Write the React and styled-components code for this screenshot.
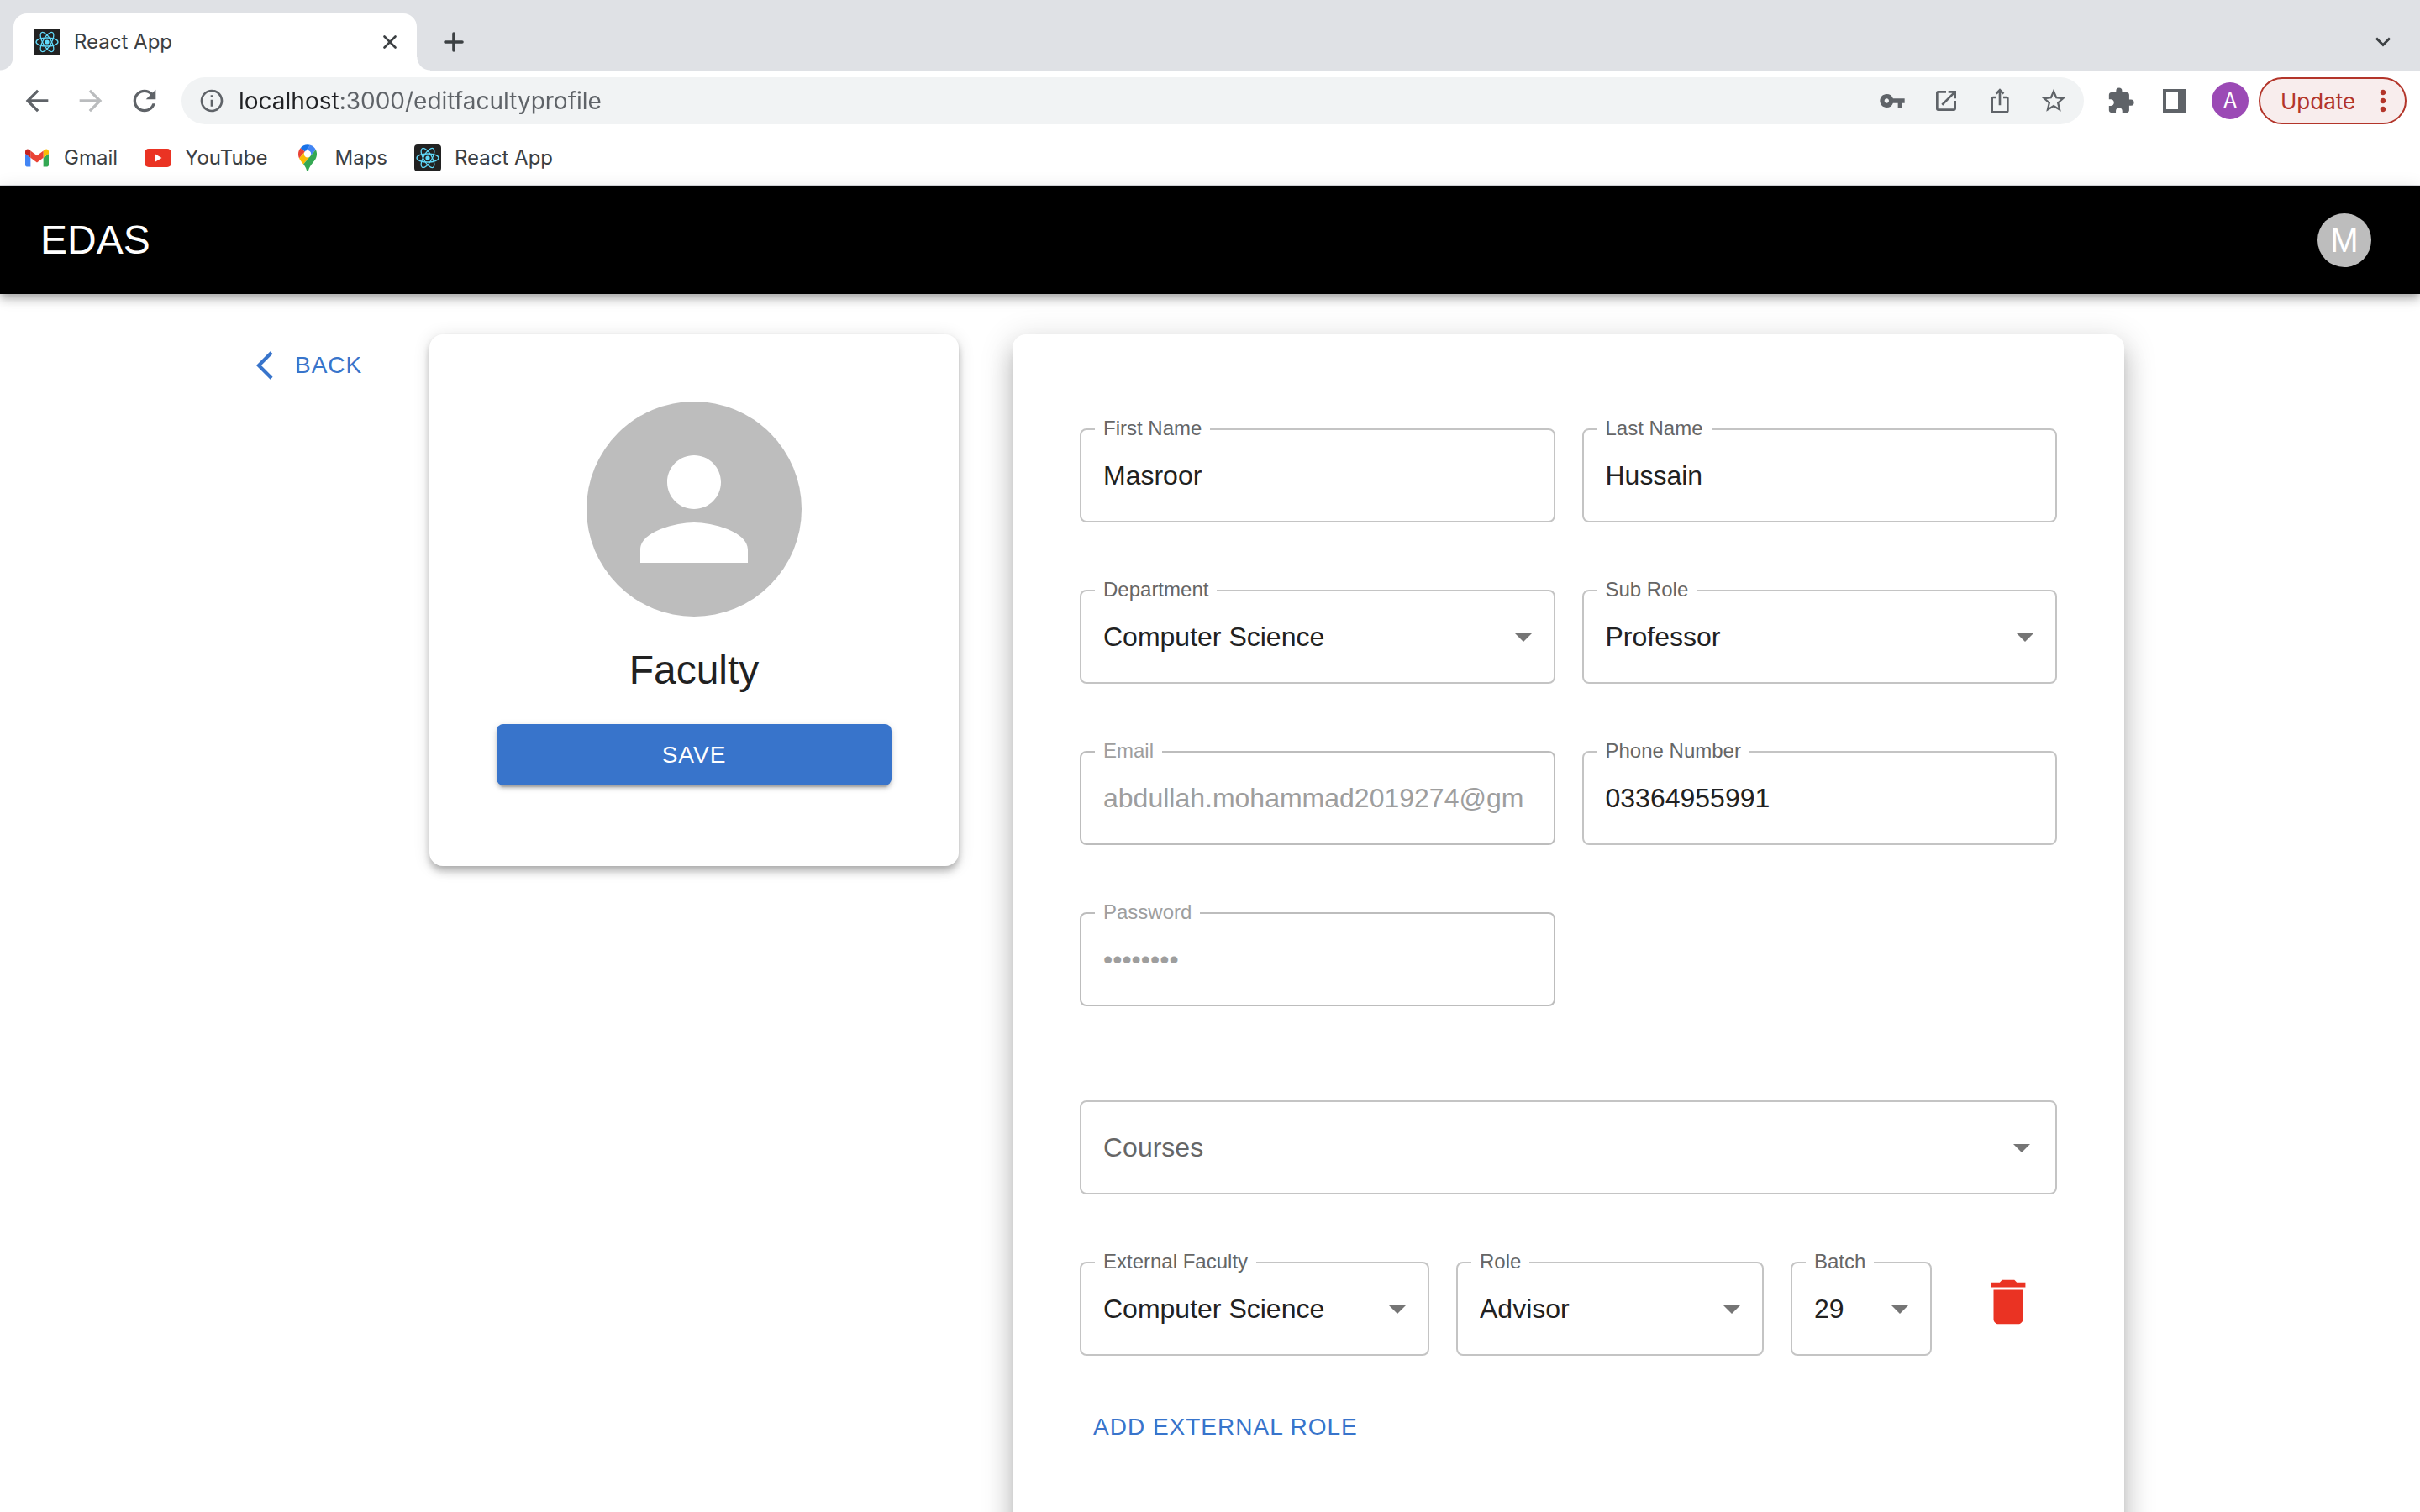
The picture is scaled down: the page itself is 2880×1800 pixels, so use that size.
import React from "react";
import styled, { createGlobalStyle, css } from "styled-components";
import {
  MdArrowBack,
  MdArrowForward,
  MdRefresh,
  MdInfoOutline,
  MdVpnKey,
  MdOpenInNew,
  MdIosShare,
  MdStarBorder,
  MdExtension,
  MdMoreVert,
} from "react-icons/md";

const chromeFont = `Inter, Roboto, "Liberation Sans", sans-serif`;
const appFont = `"Liberation Sans", Arial, sans-serif`;

const GlobalStyle = createGlobalStyle`
  *, *::before, *::after { box-sizing: border-box; }
  body { margin: 0; background: #fff; font-family: ${appFont}; }
  button, input, select { font: inherit; color: inherit; margin: 0; }
  button { cursor: pointer; }
  svg { display: block; flex: none; }
`;

const Window = styled.div`
  display: flex;
  flex-direction: column;
  height: 100vh;
  overflow: hidden;
`;

/* ---------- Browser frame ---------- */

const BrowserFrame = styled.header`
  flex: none;
  font-family: ${chromeFont};
  border-bottom: 2px solid #dadce0;
`;

const TabStrip = styled.div`
  display: flex;
  align-items: center;
  height: 84px;
  padding: 16px 12px 0 16px;
  background: #dfe1e5;
  color: #3c4043;
`;

const Tab = styled.div`
  position: relative;
  display: flex;
  align-items: center;
  align-self: flex-end;
  gap: 16px;
  width: 480px;
  height: 68px;
  padding: 0 16px 0 24px;
  border-radius: 16px 16px 0 0;
  background: #fff;
  font-size: 24px;

  &::before,
  &::after {
    content: "";
    position: absolute;
    bottom: 0;
    width: 16px;
    height: 16px;
  }
  &::before {
    right: 100%;
    background: radial-gradient(circle at 0 0, transparent 15px, #fff 16px);
  }
  &::after {
    left: 100%;
    background: radial-gradient(circle at 100% 0, transparent 15px, #fff 16px);
  }
`;

const TabTitle = styled.span`
  flex: 1;
  line-height: 32px;
`;

const IconButton = styled.button`
  display: flex;
  flex: none;
  align-items: center;
  justify-content: center;
  width: ${(p) => p.$width || 64}px;
  height: 56px;
  padding: 0;
  border: 0;
  background: none;
  color: ${(p) => p.$color || "#5f6368"};
`;

const Spacer = styled.div`
  flex: 1;
`;

const Toolbar = styled.div`
  display: flex;
  align-items: center;
  gap: 12px;
  padding: 8px 16px 8px 12px;
`;

const ButtonGroup = styled.div`
  display: flex;
  align-items: center;
`;

const AddressBar = styled.div`
  display: flex;
  flex: 1;
  align-items: center;
  height: 56px;
  padding: 0 4px;
  border-radius: 28px;
  background: #f1f3f4;
`;

const AddressInput = styled.input`
  flex: 1;
  min-width: 0;
  height: 40px;
  padding: 0;
  border: 0;
  outline: 0;
  font-size: 28px;
  background: linear-gradient(to right, #202124 122px, #5f6368 122px);
  background-clip: text;
  -webkit-background-clip: text;
  -webkit-text-fill-color: transparent;
`;

const ProfileBadge = styled.button`
  width: 44px;
  height: 44px;
  padding: 0;
  border: 0;
  border-radius: 50%;
  background: #9b4ab5;
  color: #fff;
  font-size: 24px;
  line-height: 44px;
`;

const UpdateButton = styled.button`
  display: flex;
  align-items: center;
  justify-content: space-between;
  width: 176px;
  height: 56px;
  padding: 0 6px 0 24px;
  border: 2px solid #b3352a;
  border-radius: 28px;
  background: #f8eded;
  color: #b3352a;
  font-size: 26px;
`;

const BookmarksBar = styled.nav`
  display: flex;
  align-items: center;
  gap: 32px;
  height: 64px;
  padding: 0 28px;
`;

const Bookmark = styled.a`
  display: flex;
  align-items: center;
  gap: 16px;
  color: #3c4043;
  font-size: 24px;
  line-height: 32px;
  text-decoration: none;
`;

const BookmarkIcon = styled.span`
  display: flex;
  align-items: center;
  justify-content: center;
  width: 32px;
  height: 32px;
`;

/* ---------- Application ---------- */

const AppBar = styled.header`
  position: relative;
  z-index: 1;
  display: flex;
  flex: none;
  align-items: center;
  justify-content: space-between;
  height: 128px;
  padding: 0 58px 0 48px;
  background: #000;
  color: #fff;
  box-shadow:
    0 4px 8px -2px rgba(0, 0, 0, 0.2),
    0 8px 10px 0 rgba(0, 0, 0, 0.14),
    0 2px 20px 0 rgba(0, 0, 0, 0.12);
`;

const Brand = styled.span`
  font-size: 48px;
  line-height: 64px;
`;

const UserAvatar = styled.button`
  width: 64px;
  height: 64px;
  padding: 0;
  border: 0;
  border-radius: 50%;
  background: #bdbdbd;
  color: #fff;
  font-size: 40px;
  line-height: 64px;
`;

const Main = styled.main`
  display: grid;
  grid-template-columns: 160px 630fr 1323fr;
  align-items: start;
  gap: 64px;
  flex: 1;
  min-height: 0;
  padding: 48px 352px 0 287px;
  overflow: hidden;
`;

const actionText = css`
  font-size: 28px;
  line-height: 49px;
  letter-spacing: 1px;
  text-transform: uppercase;
`;

const TextButton = styled.button`
  ${actionText}
  display: flex;
  align-items: center;
  gap: 16px;
  align-self: start;
  padding: 12px 16px;
  border: 0;
  background: none;
  color: #3874cb;
`;

const BackButton = styled(TextButton)`
  padding-left: 8px;
`;

const Card = styled.section`
  padding: 80px 80px 96px;
  border-radius: 16px;
  background: #fff;
`;

const ProfileCard = styled(Card)`
  display: flex;
  flex-direction: column;
  align-items: center;
  gap: 32px;
  box-shadow:
    0 4px 8px -2px rgba(0, 0, 0, 0.2),
    0 8px 10px 0 rgba(0, 0, 0, 0.14),
    0 2px 20px 0 rgba(0, 0, 0, 0.12);
`;

const Portrait = styled.div`
  display: flex;
  align-items: center;
  justify-content: center;
  width: 256px;
  height: 256px;
  border-radius: 50%;
  background: #bdbdbd;
  color: #fff;
`;

const RoleTitle = styled.h1`
  margin: 0;
  color: #212121;
  font-size: 48px;
  font-weight: 400;
  line-height: 64px;
`;

const SaveButton = styled.button`
  ${actionText}
  width: 100%;
  padding: 12px 32px;
  border: 0;
  border-radius: 8px;
  background: #3874cb;
  color: #fff;
  box-shadow:
    0 6px 2px -4px rgba(0, 0, 0, 0.2),
    0 4px 4px 0 rgba(0, 0, 0, 0.14),
    0 2px 10px 0 rgba(0, 0, 0, 0.12);
`;

const FormCard = styled(Card)`
  padding: 100px 80px 160px;
  box-shadow:
    0 12px 12px -6px rgba(0, 0, 0, 0.2),
    0 20px 28px 2px rgba(0, 0, 0, 0.14),
    0 8px 36px 6px rgba(0, 0, 0, 0.12);
`;

const Form = styled.form`
  display: flex;
  flex-direction: column;
  gap: 68px;
`;

const DetailsGrid = styled.div`
  display: grid;
  grid-template-columns: 1fr 1fr;
  gap: 68px 32px;
  margin-bottom: 44px;
`;

const ExternalSection = styled.div`
  display: flex;
  flex-direction: column;
  gap: 48px;
`;

const ExternalRow = styled.div`
  display: grid;
  grid-template-columns: 416fr 366fr 168fr 117fr;
  gap: 32px;
`;

const Outline = styled.fieldset`
  display: grid;
  min-width: 0;
  margin: 0;
  padding: 0;
  border: 2px solid ${(p) => (p.$muted ? "#bdbdbd" : "#c4c4c4")};
  border-radius: 8px;
`;

const Legend = styled.legend`
  margin-left: 16px;
  padding: 0 10px 2px;
  color: ${(p) => (p.$muted ? "#9e9e9e" : "#666")};
  font-size: 24px;
  line-height: 24px;
`;

const control = css`
  grid-area: 1 / 1;
  width: 100%;
  min-width: 0;
  height: ${(p) => (p.$bare ? 108 : 96)}px;
  padding: ${(p) => (p.$bare ? "36px 26px" : "24px 26px 36px")};
  border: 0;
  outline: 0;
  background: none;
  color: ${(p) => (p.$bare ? "#666" : "#212121")};
  font-size: 32px;
  line-height: 36px;
`;

const TextInput = styled.input`
  ${control}
  &:disabled {
    color: #9e9e9e;
    -webkit-text-fill-color: #9e9e9e;
    opacity: 1;
  }
`;

const Select = styled.select`
  ${control}
  appearance: none;
`;

const ArrowSlot = styled.span`
  grid-area: 1 / 1;
  justify-self: end;
  padding: ${(p) => (p.$bare ? "30px 16px" : "18px 12px")};
  color: #757575;
  pointer-events: none;
`;

const DeleteButton = styled.button`
  display: flex;
  align-items: center;
  justify-content: center;
  align-self: start;
  height: 120px;
  padding: 0;
  border: 0;
  background: none;
  color: #ea3323;
`;

/* ---------- Drawings ---------- */

const Glyph = ({ size, d }) => (
  <svg width={size} height={size} viewBox="0 0 24 24" fill="currentColor" aria-hidden="true">
    <path d={d} />
  </svg>
);

const ReactLogo = () => (
  <svg width="32" height="32" viewBox="0 0 32 32" aria-hidden="true">
    <rect width="32" height="32" rx="4" fill="#222" />
    <g transform="translate(16 16)" fill="none" stroke="#61dafb" strokeWidth="1.3">
      <circle r="2.6" fill="#61dafb" stroke="none" />
      <ellipse rx="13" ry="5" />
      <ellipse rx="13" ry="5" transform="rotate(60)" />
      <ellipse rx="13" ry="5" transform="rotate(120)" />
    </g>
  </svg>
);

const GmailLogo = () => (
  <svg width="28" height="22" viewBox="52 42 88 66" aria-hidden="true">
    <path fill="#4285f4" d="M58 108h14V74L52 59v43c0 3.32 2.69 6 6 6" />
    <path fill="#34a853" d="M120 108h14c3.32 0 6-2.69 6-6V59l-20 15" />
    <path fill="#fbbc04" d="M120 48v26l20-15v-8c0-7.42-8.47-11.65-14.4-7.2" />
    <path fill="#ea4335" d="M72 74V48l24 18 24-18v26L96 92" />
    <path fill="#c5221f" d="M52 51v8l20 15V48l-5.6-4.2c-5.94-4.45-14.4-.22-14.4 7.2" />
  </svg>
);

const YouTubeLogo = () => (
  <svg width="32" height="22" viewBox="0 0 32 22" aria-hidden="true">
    <rect width="32" height="22" rx="5" fill="#ea3323" />
    <path d="M13 6.500v9l7.500-4.500z" fill="#fff" />
  </svg>
);

const MapsLogo = () => (
  <svg width="22" height="32" viewBox="0 0 92.3 132.3" aria-hidden="true">
    <path fill="#1a73e8" d="M60.2 2.2C55.8.8 51 0 46.1 0 32 0 19.3 6.4 10.8 16.5l21.8 18.3L60.2 2.2z" />
    <path fill="#ea4335" d="M10.8 16.5C4.1 24.5 0 34.9 0 46.1c0 8.7 1.7 15.7 4.6 22l28-33.3-21.8-18.3z" />
    <path fill="#4285f4" d="M46.2 28.5c9.8 0 17.7 7.9 17.7 17.7 0 4.3-1.6 8.3-4.2 11.4 0 0 13.9-16.6 27.5-32.7-5.6-10.8-15.3-19-27-22.7L32.6 34.8c3.3-3.8 8.1-6.3 13.6-6.3" />
    <path fill="#fbbc04" d="M46.2 63.8c-9.8 0-17.7-7.9-17.7-17.7 0-4.3 1.5-8.3 4.1-11.3l-28 33.3c4.8 10.6 12.8 19.2 21 29.9l34.1-40.5c-3.3 3.9-8.1 6.3-13.5 6.3" />
    <path fill="#34a853" d="M59.1 109.2c15.4-24.1 33.3-35 33.3-63 0-7.7-1.9-14.9-5.2-21.3L25.6 98c2.6 3.4 5.3 7.3 7.9 11.3 9.4 14.5 6.8 23.1 12.8 23.1s3.4-8.7 12.800-23.2" />
  </svg>
);

const CloseGlyph = () => (
  <svg width="16" height="16" viewBox="0 0 16 16" stroke="currentColor" strokeWidth="2.600" strokeLinecap="round" aria-hidden="true">
    <path d="M1.500 1.500l13 13M14.500 1.500l-13 13" />
  </svg>
);

const PlusGlyph = () => (
  <svg width="24" height="24" viewBox="0 0 24 24" stroke="currentColor" strokeWidth="3.600" strokeLinecap="round" aria-hidden="true">
    <path d="M12 2v20M2 12h20" />
  </svg>
);

const ChevronGlyph = () => (
  <svg width="20" height="12" viewBox="0 0 20 12" fill="none" stroke="currentColor" strokeWidth="3" aria-hidden="true">
    <path d="M2 1.500l8 8 8-8" />
  </svg>
);

const SidePanelGlyph = () => (
  <svg width="28" height="28" viewBox="0 0 28 28" fill="currentColor" aria-hidden="true">
    <path fillRule="evenodd" d="M0 0h28v28H0zM4 4v20h14V4z" />
  </svg>
);

/* ---------- Fields ---------- */

const Field = ({ id, label, disabled, type = "text", value }) => (
  <Outline $muted={disabled}>
    <Legend $muted={disabled}>
      <label htmlFor={id}>{label}</label>
    </Legend>
    <TextInput id={id} type={type} defaultValue={value} disabled={disabled} />
  </Outline>
);

const SelectField = ({ id, label, value }) => (
  <Outline>
    <Legend>
      <label htmlFor={id}>{label}</label>
    </Legend>
    <Select id={id} defaultValue={value}>
      <option>{value}</option>
    </Select>
    <ArrowSlot>
      <Glyph size={48} d="M7 10l5 5 5-5z" />
    </ArrowSlot>
  </Outline>
);

const bookmarks = [
  { name: "Gmail", Logo: GmailLogo },
  { name: "YouTube", Logo: YouTubeLogo },
  { name: "Maps", Logo: MapsLogo },
  { name: "React App", Logo: ReactLogo },
];

const Browser = () => (
  <BrowserFrame>
    <TabStrip>
      <Tab>
        <ReactLogo />
        <TabTitle>React App</TabTitle>
        <IconButton $width={32} $color="#3c4043" aria-label="Close tab">
          <CloseGlyph />
        </IconButton>
      </Tab>
      <IconButton $width={88} $color="#3c4043" aria-label="New tab">
        <PlusGlyph />
      </IconButton>
      <Spacer />
      <IconButton $color="#3c4043" aria-label="Search tabs">
        <ChevronGlyph />
      </IconButton>
    </TabStrip>
    <Toolbar>
      <ButtonGroup>
        <IconButton aria-label="Back">
          <MdArrowBack size={40} />
        </IconButton>
        <IconButton $color="#babcbe" aria-label="Forward">
          <MdArrowForward size={40} />
        </IconButton>
        <IconButton aria-label="Reload">
          <MdRefresh size={40} />
        </IconButton>
      </ButtonGroup>
      <AddressBar>
        <IconButton aria-label="Site information">
          <MdInfoOutline size={32} />
        </IconButton>
        <AddressInput aria-label="Address" defaultValue="localhost:3000/editfacultyprofile" />
        <IconButton aria-label="Passwords">
          <MdVpnKey size={32} />
        </IconButton>
        <IconButton aria-label="Open in app">
          <MdOpenInNew size={32} />
        </IconButton>
        <IconButton aria-label="Share">
          <MdIosShare size={32} />
        </IconButton>
        <IconButton aria-label="Bookmark this page">
          <MdStarBorder size={34} />
        </IconButton>
      </AddressBar>
      <ButtonGroup>
        <IconButton aria-label="Extensions">
          <MdExtension size={34} />
        </IconButton>
        <IconButton aria-label="Side panel">
          <SidePanelGlyph />
        </IconButton>
      </ButtonGroup>
      <ProfileBadge aria-label="Profile A">A</ProfileBadge>
      <UpdateButton>
        Update
        <MdMoreVert size={40} />
      </UpdateButton>
    </Toolbar>
    <BookmarksBar aria-label="Bookmarks">
      {bookmarks.map(({ name, Logo }) => (
        <Bookmark key={name} href="#">
          <BookmarkIcon>
            <Logo />
          </BookmarkIcon>
          {name}
        </Bookmark>
      ))}
    </BookmarksBar>
  </BrowserFrame>
);

export default function App() {
  return (
    <>
      <GlobalStyle />
      <Window>
        <Browser />
        <AppBar>
          <Brand>EDAS</Brand>
          <UserAvatar aria-label="Account M">M</UserAvatar>
        </AppBar>
        <Main>
          <BackButton type="button">
            <Glyph size={40} d="M17.77 3.77 16 2 6 12l10 10 1.770-1.770L9.540 12z" />
            Back
          </BackButton>
          <ProfileCard>
            <Portrait>
              <Glyph
                size={192}
                d="M12 12c2.210 0 4-1.790 4-4s-1.790-4-4-4-4 1.790-4 4 1.790 4 4 4zm0 2c-2.670 0-8 1.340-8 4v2h16v-2c0-2.660-5.330-4-8-4z"
              />
            </Portrait>
            <RoleTitle>Faculty</RoleTitle>
            <SaveButton type="submit" form="faculty-form">
              Save
            </SaveButton>
          </ProfileCard>
          <FormCard>
            <Form id="faculty-form" onSubmit={(e) => e.preventDefault()}>
              <DetailsGrid>
                <Field id="first-name" label="First Name" value="Masroor" />
                <Field id="last-name" label="Last Name" value="Hussain" />
                <SelectField id="department" label="Department" value="Computer Science" />
                <SelectField id="sub-role" label="Sub Role" value="Professor" />
                <Field id="email" label="Email" value="abdullah.mohammad2019274@gm" disabled />
                <Field id="phone" label="Phone Number" value="03364955991" />
                <Field id="password" label="Password" type="password" value="password" disabled />
              </DetailsGrid>
              <Outline>
                <Select $bare aria-label="Courses">
                  <option>Courses</option>
                </Select>
                <ArrowSlot $bare>
                  <Glyph size={48} d="M7 10l5 5 5-5z" />
                </ArrowSlot>
              </Outline>
              <ExternalSection>
                <ExternalRow>
                  <SelectField id="external-faculty" label="External Faculty" value="Computer Science" />
                  <SelectField id="external-role" label="Role" value="Advisor" />
                  <SelectField id="external-batch" label="Batch" value="29" />
                  <DeleteButton type="button" aria-label="Delete external role">
                    <Glyph
                      size={70}
                      d="M6 19c0 1.100.9 2 2 2h8c1.100 0 2-.9 2-2V7H6v12zM19 4h-3.500l-1-1h-5l-1 1H5v2h14V4z"
                    />
                  </DeleteButton>
                </ExternalRow>
                <TextButton type="button">Add External Role</TextButton>
              </ExternalSection>
            </Form>
          </FormCard>
        </Main>
      </Window>
    </>
  );
}
